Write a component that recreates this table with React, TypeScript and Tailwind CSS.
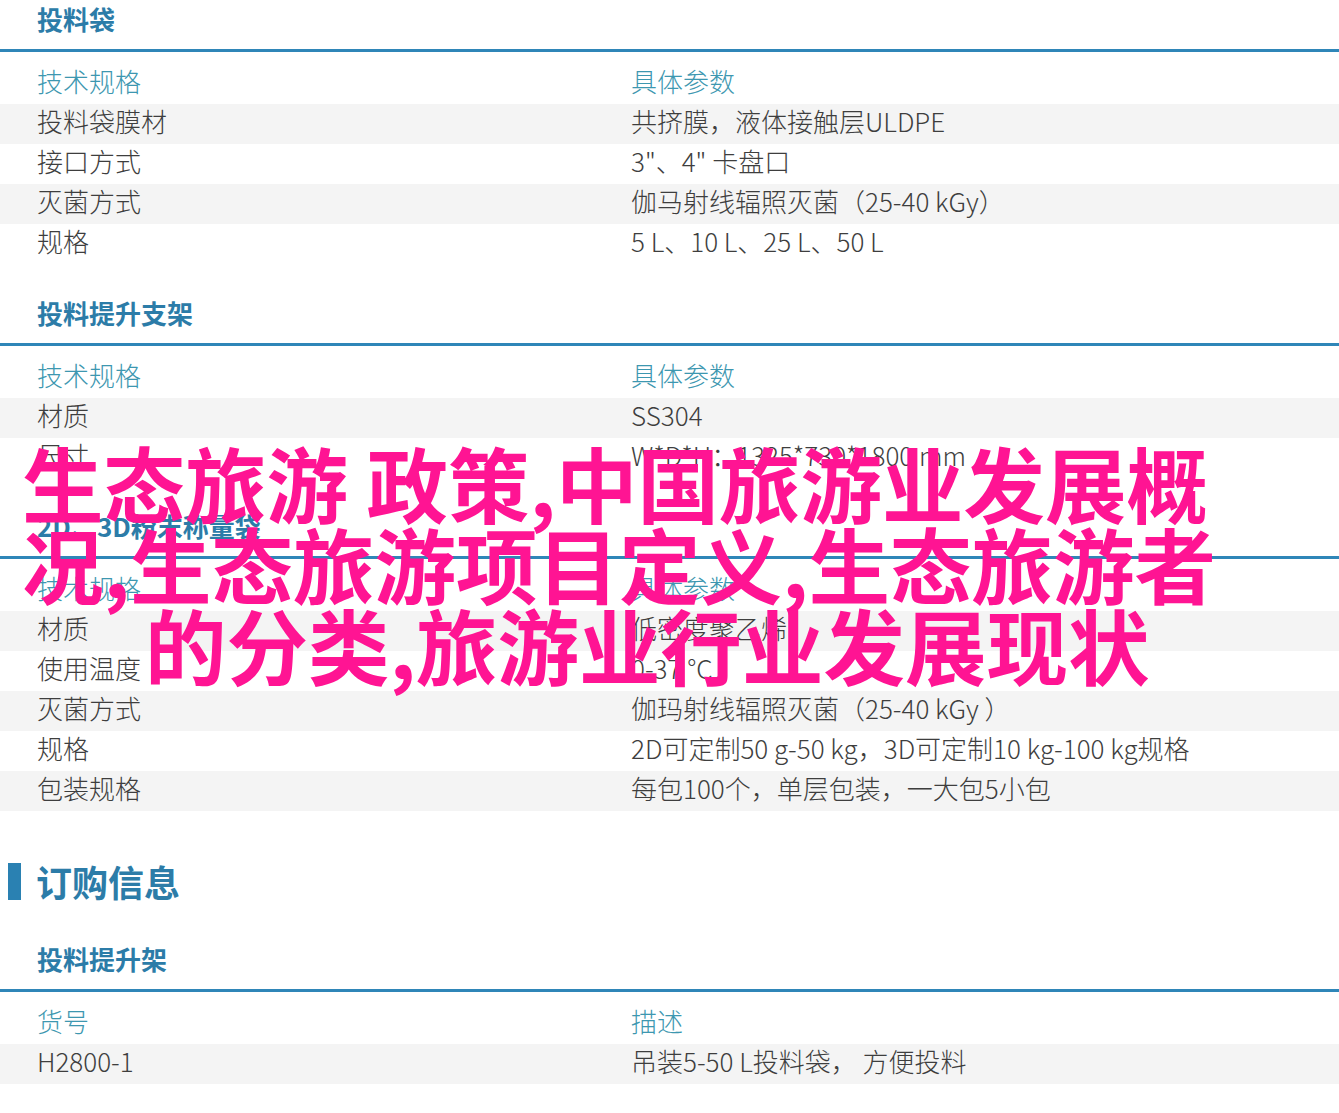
const bagRows = [
  ["投料袋膜材", "共挤膜，液体接触层ULDPE"],
  ["接口方式", "3\"、4\" 卡盘口"],
  ["灭菌方式", "伽马射线辐照灭菌（25-40 kGy）"],
  ["规格", "5 L、10 L、25 L、50 L"],
];

const standRows = [
  ["材质", "SS304"],
  ["尺寸", "W*D*H：1325*730*1800 mm"],
];

const powderRows = [
  ["材质", "低密度聚乙烯"],
  ["使用温度", "0-37 °C"],
  ["灭菌方式", "伽玛射线辐照灭菌（25-40 kGy ）"],
  ["规格", "2D可定制50 g-50 kg，3D可定制10 kg-100 kg规格"],
  ["包装规格", "每包100个，单层包装，一大包5小包"],
];

const orderRows = [["H2800-1", "吊装5-50 L投料袋， 方便投料"]];

function SpecSection({
  title,
  head,
  rows,
  className = "",
}: {
  title: string;
  head: [string, string];
  rows: string[][];
  className?: string;
}) {
  return (
    <section className={className}>
      <div className="h-[49px] pl-[37px]">
        <h3 className="text-[26px] leading-[37px] font-bold text-[#2c7ca8]">{title}</h3>
      </div>
      <div className="h-[3px] bg-[#2f86b8]" />

      {/* header row */}
      <div className="mt-[12px] grid h-[40px] grid-cols-[594px_1fr] items-center pb-[6px] text-[26px] leading-[34px] font-light text-[#3d97b0]">
        <div className="pl-[37px]">{head[0]}</div>
        <div className="pl-[37px]">{head[1]}</div>
      </div>

      {rows.map((row, i) => (
        <div
          key={row[0] + i}
          className={
            "grid h-[40px] grid-cols-[594px_1fr] items-center pb-[6px] text-[26px] leading-[34px] font-light text-[#3e3e3e] " +
            (i % 2 === 0 ? "bg-[#f4f4f4]" : "bg-white")
          }
        >
          <div className="pl-[37px] whitespace-nowrap">{row[0]}</div>
          <div className="pl-[37px] whitespace-nowrap">{row[1]}</div>
        </div>
      ))}
    </section>
  );
}

export default function App() {
  return (
    <div className="relative min-h-[1113px] w-[1339px] overflow-hidden bg-white font-['Noto_Sans_CJK_SC',sans-serif]">
      <SpecSection title="投料袋" head={["技术规格", "具体参数"]} rows={bagRows} />
      <SpecSection className="mt-[30px]" title="投料提升支架" head={["技术规格", "具体参数"]} rows={standRows} />
      <SpecSection className="mt-[29px]" title="2D、3D粉末称量袋" head={["技术规格", "具体参数"]} rows={powderRows} />

      {/* 订购信息 */}
      <div className="mt-[52px] mb-[40px] flex h-[37px] items-center">
        <div className="ml-[8px] h-[37px] w-[13px] bg-[#2a81b2]" />
        <h2 className="ml-[15px] text-[36px] leading-[37px] font-bold text-[#2c7ca8]">订购信息</h2>
      </div>

      <SpecSection title="投料提升架" head={["货号", "描述"]} rows={orderRows} />

      {/* pink overlay headline */}
      <div className="absolute top-[441px] left-[22px] text-[81.5px] leading-[81px] font-bold whitespace-nowrap text-[#ff1493]">
        <div>生态旅游 政策,中国旅游业发展概</div>
        <div>况,生态旅游项目定义,生态旅游者</div>
        <div className="pl-[123px]">的分类,旅游业行业发展现状</div>
      </div>
    </div>
  );
}
